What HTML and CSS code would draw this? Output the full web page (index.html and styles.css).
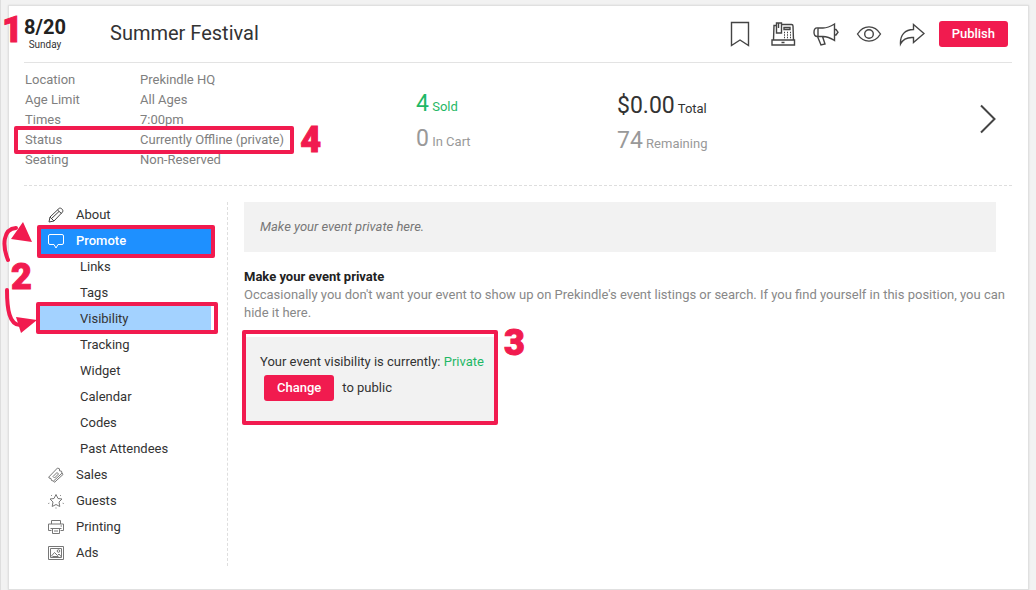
FILE: index.html
```
<!DOCTYPE html>
<html lang="en">
<head>
  <meta charset="UTF-8" />
  <meta name="viewport" content="width=device-width, initial-scale=1" />
  <title>Summer Festival - Visibility</title>
  <link rel="stylesheet" href="styles.css">
</head>
<body>
  <div class="card">

    <!-- Event header -->
    <header class="event-header">
      <div class="date">
        <strong>8/20</strong>
        <span>Sunday</span>
        <b class="step step-1">1</b>
      </div>
      <h1>Summer Festival</h1>
      <div class="actions">
        <button class="icon-btn" aria-label="Bookmark">
          <svg viewBox="0 0 26 26"><path d="M4.500 1.500h17v23l-8.500-5.500-8.500 5.500z"/></svg>
        </button>
        <button class="icon-btn" aria-label="Box office">
          <svg viewBox="0 0 26 26">
            <path d="M2 19h22.500v5H2zM3.500 19 4 4.500h2M11 3.500h10.500q1.500 0 1.500 1.500l.5 14M6.500 2h5v10h-5zM14 6.500h6v2h-6z"/>
            <path d="M8.500 2v5M11.500 21.500h3"/>
            <path class="dots" d="M14 11.500h7M14 14h7M14 16.500h7"/>
          </svg>
        </button>
        <button class="icon-btn" aria-label="Announce">
          <svg viewBox="0 0 26 26"><path d="M5 7h5c4.500 0 7.500-1.500 11.500-4v16.500c-4-2.500-7-4-11.500-4H5zM5 7C2 6.500 1 8.500 1 11.200s1 4.600 4 4.300M21.500 8.500h1.500l2 2.700-2 2.800h-1.500M4.500 15.500l3.500 8.500 4-1-2.500-7.500"/></svg>
        </button>
        <button class="icon-btn" aria-label="Preview">
          <svg viewBox="0 0 26 26"><path d="M1.500 13c6-9.500 17-9.500 23 0-6 9.500-17 9.500-23 0z"/><circle cx="13" cy="13" r="4.300"/></svg>
        </button>
        <button class="icon-btn" aria-label="Share">
          <svg viewBox="0 0 26 26"><path d="M14.500 3.500 25 12.500l-10.500 9v-5C8 16 4 18 1.500 23 1 14 6 8.500 14.500 8.500z"/></svg>
        </button>
        <button class="btn">Publish</button>
      </div>
    </header>

    <!-- Event summary -->
    <section class="summary">
      <dl class="details">
        <div><dt>Location</dt><dd>Prekindle HQ</dd></div>
        <div><dt>Age Limit</dt><dd>All Ages</dd></div>
        <div><dt>Times</dt><dd>7:00pm</dd></div>
        <div class="marked mark-status"><dt>Status</dt><dd>Currently Offline (private)</dd><b class="step step-4">4</b></div>
        <div><dt>Seating</dt><dd>Non-Reserved</dd></div>
      </dl>
      <div class="stats">
        <p class="green"><big>4</big> Sold</p>
        <p class="muted"><big>0</big> In Cart</p>
      </div>
      <div class="stats totals">
        <p><big>$0.00</big> Total</p>
        <p class="muted"><big>74</big> Remaining</p>
      </div>
      <button class="next" aria-label="Next event">
        <svg viewBox="0 0 18 30"><path d="M2 1.500 15.500 15 2 28.500"/></svg>
      </button>
    </section>

    <div class="content">
      <!-- Side menu -->
      <nav class="menu">
        <a href="#about"><svg viewBox="0 0 16 16"><path d="M1 15l1-5L11 1.500c1.500-1.500 5 1.500 3.500 3.500L6 14zM2 10l4 4M9.500 3l4 3.500M11 4.500l-8 7.500"/></svg>About</a>
        <a href="#promote" class="active marked mark-promote"><svg viewBox="0 0 16 16"><path d="M2 1.500h12q1.500 0 1.500 1.500v7q0 1.500-1.500 1.500h-4L8 15l-2-3.500H2Q.5 11.500.5 10V3Q.5 1.500 2 1.500z"/></svg>Promote</a>
        <a href="#links" class="sub">Links</a>
        <a href="#tags" class="sub">Tags</a>
        <a href="#visibility" class="sub current marked mark-visibility">Visibility</a>
        <a href="#tracking" class="sub">Tracking</a>
        <a href="#widget" class="sub">Widget</a>
        <a href="#calendar" class="sub">Calendar</a>
        <a href="#codes" class="sub">Codes</a>
        <a href="#past" class="sub">Past Attendees</a>
        <a href="#sales"><svg viewBox="0 0 16 16" class="light"><path d="M.8 10 9.500 1l2 .8v2l2 .4.500 2L5.500 14l-2-.5-.5-2-2-.5zM5 9.500 9 5.500l1.500 1.500-4 4zM5.500 14l1 1.300L15 7.500 14 6"/></svg>Sales</a>
        <a href="#guests"><svg viewBox="0 0 16 16" class="light"><path d="M8 1.500l2 4 4 .5-3 3 .8 4.500L8 11.500l-3.800 2L5 9 2 6l4-.5z"/><path d="M3 2l.8.800M13 2l-.8.800M.3 10.500l1-.3M15.700 10.500l-1-.3M8 14.500v1"/></svg>Guests</a>
        <a href="#printing"><svg viewBox="0 0 16 16" class="light"><path d="M3.500 5V1.500h9V5M3.500 11.500h-3V5h15v6.500h-3M4.500 9.500h7v5h-7zM2.500 9.500h11M6 12h4M12.500 7h1.500"/></svg>Printing</a>
        <a href="#ads"><svg viewBox="0 0 16 16" class="light"><path d="M.5 1.500h15v13H.5zM2.500 3.500h11v9h-11zM3 11.500l3.500-4 3 3 1.500-1.500 2.500 3M4.500 11.500h6"/><circle cx="10.500" cy="6" r="1.300"/></svg>Ads</a>

        <b class="step step-2">2</b>
        <svg class="arrows" viewBox="0 0 40 114" aria-hidden="true">
          <path class="line" d="M8 41C2 26 3 10 16 9M7 71c0 18 2 36 14 35"/>
          <path class="head" d="M23 3l9 20-21-3zM16 98l21 3-16 13z"/>
        </svg>
      </nav>

      <!-- Visibility panel -->
      <main class="panel">
        <p class="hint">Make your event private here.</p>
        <h2>Make your event private</h2>
        <p class="muted-text">Occasionally you don't want your event to show up on Prekindle's event listings or search. If you find yourself in this position, you can hide it here.</p>
        <div class="visibility-box marked mark-box">
          <p>Your event visibility is currently: <span class="green">Private</span></p>
          <p class="change"><button class="btn">Change</button> to public</p>
          <b class="step step-3">3</b>
        </div>
      </main>
    </div>
  </div>
</body>
</html>
```
FILE: styles.css
```
* {
  box-sizing: border-box;
}

body {
  background-color: #f2f2f2;
  border-left: 1px solid #dedede;
  color: #333;
  font-family: Roboto, sans-serif;
  font-size: 13px;
  line-height: 18px;
  margin: 0;
  padding: 5px 7px 0;
}

h1, h2, p, dl, dd {
  margin: 0;
}

button {
  border: none;
  cursor: pointer;
  font-family: inherit;
}

svg {
  fill: none;
  stroke: #444;
  display: block;
}

.card {
  background-color: #fff;
  border: 1px solid #e0e0e0;
  box-shadow: 0 0 2px rgba(0, 0, 0, 0.1);
  padding: 0 16px 23px 15px;
}

/* Header */
.event-header {
  display: flex;
  align-items: center;
  height: 57px;
  border-bottom: 1px solid #e3e3e3;
}

.date {
  position: relative;
  display: flex;
  flex-direction: column;
  align-items: center;
  width: 42px;
  margin-right: 44px;
}

.date strong {
  color: #222;
  font-size: 20px;
  font-weight: 700;
  line-height: 22px;
}

.date span {
  font-size: 10px;
  line-height: 14px;
}

h1 {
  font-size: 20px;
  font-weight: 400;
  line-height: 24px;
  padding-bottom: 3px;
}

.actions {
  display: flex;
  align-items: center;
  gap: 17px;
  margin-left: auto;
  padding-right: 4px;
}

.icon-btn,
.next {
  background: none;
  padding: 0;
}

.icon-btn svg {
  width: 26px;
  height: 26px;
  stroke-width: 1.4;
}

.dots {
  stroke-dasharray: 1 2;
}

.btn {
  background-color: #f11b4f;
  border-radius: 3px;
  color: #fff;
  font-size: 13px;
  font-weight: 500;
  line-height: 18px;
  padding: 4px 13px;
}

.actions .btn {
  margin-left: -3px;
}

/* Summary */
.summary {
  display: flex;
  height: 123px;
  padding-top: 7px;
  border-bottom: 1px dashed #dedede;
}

.details {
  width: 392px;
  color: #808080;
  line-height: 20px;
  padding-left: 1px;
}

.details div {
  display: flex;
  width: 266px;
}

.details dt {
  width: 115px;
}

.details dd {
  white-space: nowrap;
}

.stats {
  width: 201px;
  padding-top: 20px;
}

.stats p {
  height: 35px;
  line-height: 34px;
}

.stats big {
  font-size: 23px;
  line-height: 24px;
}

.totals {
  padding-top: 22px;
}

.green {
  color: #1fb866;
}

.muted {
  color: #999;
}

.next {
  margin: 0 15px 0 auto;
}

.next svg {
  width: 18px;
  height: 30px;
  margin-bottom: 18px;
  stroke-width: 2;
}

/* Menu */
.content {
  display: flex;
  padding-top: 16px;
}

.menu {
  position: relative;
  width: 204px;
  flex-shrink: 0;
  padding: 0 16px;
  border-right: 1px dashed #dedede;
}

.menu a {
  display: flex;
  align-items: center;
  gap: 12px;
  height: 26px;
  padding-left: 8px;
  color: #333;
  text-decoration: none;
}

.menu a svg {
  width: 16px;
  height: 16px;
  stroke-width: 1;
}

.menu a .light {
  stroke: #777;
}

.menu .sub {
  padding-left: 40px;
}

.menu .active {
  background-color: #1e90ff;
  color: #fff;
  font-weight: 500;
}

.menu .active svg {
  stroke: #fff;
}

.menu .current {
  background-color: #a3d2ff;
}

/* Panel */
.panel {
  flex: 1;
  padding-left: 16px;
}

.hint {
  background-color: #f2f2f2;
  color: #777;
  font-style: italic;
  padding: 16px;
  margin: 0 16px 16px 0;
}

h2 {
  color: #222;
  font-size: 13px;
  font-weight: 700;
}

.muted-text {
  color: #888;
}

.visibility-box {
  width: fit-content;
  background-color: #f2f2f2;
  margin-top: 15px;
  padding: 16px 13px 16px 16px;
}

.change {
  display: flex;
  align-items: center;
  gap: 8px;
  padding: 4px;
}

/* Highlights and step numbers */
.marked {
  position: relative;
}

.marked::after {
  content: "";
  position: absolute;
  border: 4px solid #f11b4f;
  border-radius: 2px;
}

.mark-status::after {
  inset: -4px -3px -4px -11px;
}

.mark-promote::after {
  inset: -3px -4px -4px -3px;
}

.mark-visibility::after {
  inset: -4px -7px -2px -4px;
}

.mark-box::after {
  inset: -7px -1px -4px -2px;
}

.step {
  position: absolute;
  color: #f11b4f;
  font-size: 36px;
  font-weight: 900;
  line-height: 36px;
  -webkit-text-stroke: 1px #f11b4f;
}

.step-1 {
  left: -22px;
  top: -4px;
}

.step-2 {
  left: -13px;
  top: 57px;
}

.step-3 {
  right: -28px;
  top: -12px;
}

.step-4 {
  right: -30px;
  top: -8px;
}

.menu .arrows {
  position: absolute;
  left: -24px;
  top: 17px;
  width: 40px;
  height: 114px;
}

.arrows .line {
  stroke: #f11b4f;
  stroke-width: 4;
  stroke-linecap: round;
}

.arrows .head {
  fill: #f11b4f;
  stroke: none;
}
```
